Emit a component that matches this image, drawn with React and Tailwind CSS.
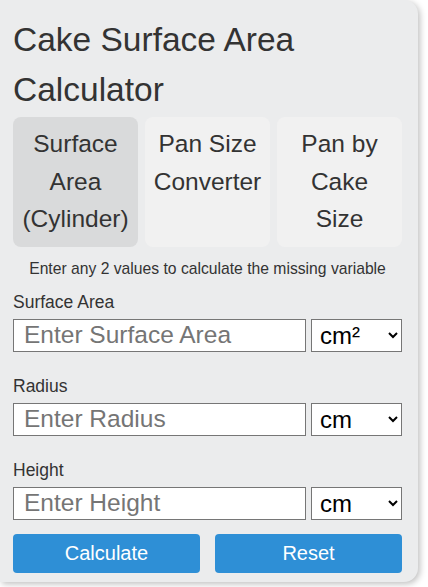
import React, { useState } from "react";

const tabs = [
  { label: ["Surface", "Area", "(Cylinder)"] },
  { label: ["Pan Size", "Converter"] },
  { label: ["Pan by", "Cake", "Size"] },
];

const fields = [
  { label: "Surface Area", placeholder: "Enter Surface Area", units: ["cm²", "m²", "in²", "ft²"] },
  { label: "Radius", placeholder: "Enter Radius", units: ["cm", "m", "in", "ft"] },
  { label: "Height", placeholder: "Enter Height", units: ["cm", "m", "in", "ft"] },
];

export default function App() {
  const [active, setActive] = useState(0);

  return (
    <div className="min-h-screen bg-white font-['Liberation_Sans',Arial,sans-serif] text-[#333]">
      <div className="w-[418px] rounded-r-[14px] bg-[#ebeced] pl-[13px] pr-[16px] pt-[15px] pb-[9px] shadow-[2px_2px_6px_rgba(0,0,0,0.25)]">
        <h1 className="text-[33.5px] leading-[50px] font-normal">Cake Surface Area Calculator</h1>

        <div className="mt-[2px] grid grid-cols-3 gap-[7px]">
          {tabs.map((tab, i) => (
            <button
              key={i}
              onClick={() => setActive(i)}
              className={`flex flex-col items-center justify-start rounded-[8px] px-1 pt-[8px] pb-[9px] text-center text-[24.5px] leading-[37.5px] text-[#333] ${
                active === i ? "bg-[#d9dadb]" : "bg-[#f1f1f1]"
              }`}
            >
              {tab.label.map((l) => (
                <span key={l}>{l}</span>
              ))}
            </button>
          ))}
        </div>

        <p className="mt-[12px] text-center text-[15.7px] leading-[20px]">
          Enter any 2 values to calculate the missing variable
        </p>

        {fields.map((f, i) => (
          <div key={f.label} className={i === 0 ? "mt-[13px]" : "mt-[24px]"}>
            <label className="block text-[17.5px] leading-[20px] text-[#333]">{f.label}</label>
            <div className="mt-[7px] flex gap-[5px]">
              <input
                type="text"
                placeholder={f.placeholder}
                className="h-[33px] min-w-0 flex-1 border border-[#767676] bg-white px-[10px] text-[24.5px] text-black placeholder:text-[#757575] outline-none"
              />
              <select className="h-[33px] w-[91px] border border-[#767676] bg-white pl-[4px] text-[24px] text-black">
                {f.units.map((u) => (
                  <option key={u}>{u}</option>
                ))}
              </select>
            </div>
          </div>
        ))}

        <div className="mt-[14px] grid grid-cols-2 gap-[15px]">
          <button className="h-[39px] rounded-[4px] bg-[#2e8fd6] text-[20px] text-white">Calculate</button>
          <button className="h-[39px] rounded-[4px] bg-[#2e8fd6] text-[20px] text-white">Reset</button>
        </div>
      </div>
    </div>
  );
}
